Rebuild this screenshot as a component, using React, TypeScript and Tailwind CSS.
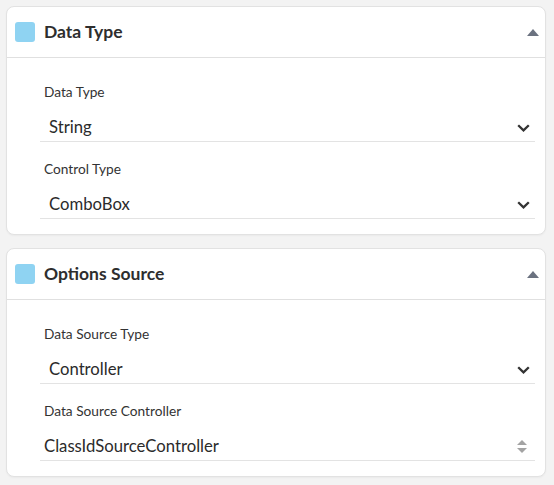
type Field = {
  label: string;
  value: string;
  kind: "select" | "spin";
};

function CaretUp() {
  return (
    <svg width="12" height="7" viewBox="0 0 12 7" className="text-[#6b7280]">
      <path d="M0 7 L6 0 L12 7 Z" fill="currentColor" />
    </svg>
  );
}

function Chevron() {
  return (
    <svg width="13" height="8" viewBox="0 0 13 8" className="text-[#333]">
      <path d="M1.2 1.2 L6.5 6.4 L11.8 1.2" fill="none" stroke="currentColor" strokeWidth="2.3" />
    </svg>
  );
}

function Spinner() {
  return (
    <svg width="10" height="13" viewBox="0 0 10 13" className="text-[#a3a3a3]">
      <path d="M0 5 L5 0 L10 5 Z" fill="currentColor" />
      <path d="M0 8 L5 13 L10 8 Z" fill="currentColor" />
    </svg>
  );
}

function FieldRow({ field, first }: { field: Field; first: boolean }) {
  return (
    <div className={first ? "" : "mt-[17px]"}>
      <div className="h-5 pl-[37px] flex items-center text-[13.7px] text-[#333]">{field.label}</div>
      <div
        className={`ml-[33px] mr-[10px] h-[40px] flex items-center justify-between border-b border-[#e3e3e3] pt-[12px] ${
          field.kind === "select" ? "pl-[9px] pr-[5px]" : "pl-[4px] pr-[8px]"
        }`}
      >
        <span className="text-[16.7px] text-[#2b2b2b]">{field.value}</span>
        {field.kind === "select" ? <Chevron /> : <Spinner />}
      </div>
    </div>
  );
}

function Section({ title, fields }: { title: string; fields: Field[] }) {
  return (
    <div className="rounded-lg border border-[#e2e2e2] bg-white shadow-[0_1px_2px_rgba(0,0,0,0.04)]">
      <div className="h-[51px] flex items-center justify-between border-b border-[#e0e0e0] pl-[8px] pr-[6px]">
        <div className="flex items-center gap-[9px]">
          <div className="h-5 w-5 rounded-[3px] bg-[#8fd3f2]" />
          <span className="text-[17.5px] font-bold text-[#2e2e2e]">{title}</span>
        </div>
        <CaretUp />
      </div>
      <div className="pt-[24px] pb-[15px]">
        {fields.map((f, i) => (
          <FieldRow key={f.label} field={f} first={i === 0} />
        ))}
      </div>
    </div>
  );
}

export default function App() {
  return (
    <div
      className="min-h-[485px] w-[554px] bg-[#f3f3f3] pt-[6px] pl-[6px] pr-[8px] flex flex-col gap-[13px]"
      style={{ fontFamily: "Lato, 'Open Sans', sans-serif" }}
    >
      <Section
        title="Data Type"
        fields={[
          { label: "Data Type", value: "String", kind: "select" },
          { label: "Control Type", value: "ComboBox", kind: "select" },
        ]}
      />
      <Section
        title="Options Source"
        fields={[
          { label: "Data Source Type", value: "Controller", kind: "select" },
          { label: "Data Source Controller", value: "ClassIdSourceController", kind: "spin" },
        ]}
      />
    </div>
  );
}
